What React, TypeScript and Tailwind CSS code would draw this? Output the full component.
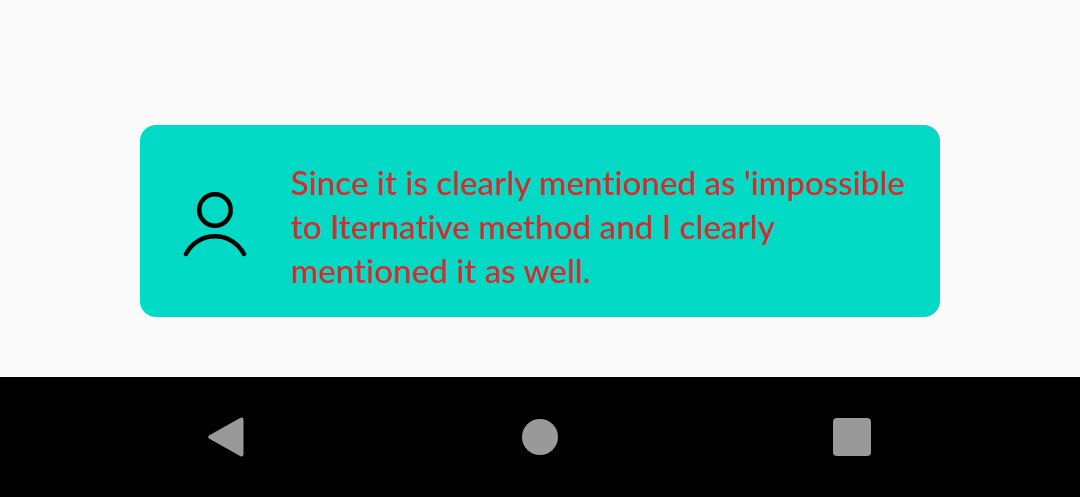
const NavBack = () => (
  <svg width="36" height="40" viewBox="0 0 36 40" className="block">
    <path d="M32.5 0.8 L1 18.6 Q-0.6 20 1 21.4 L32.5 39.2 Q35.5 40.2 35.5 37 L35.5 3 Q35.5 -0.2 32.5 0.8 Z" fill="#999999" />
  </svg>
);

const UserIcon = () => (
  <svg width="64" height="74" viewBox="0 0 64 74" fill="none" stroke="#000000" strokeWidth="4.5" strokeLinecap="round" className="block">
    <circle cx="32" cy="26" r="15.75" />
    <path d="M3 70 A32.6 32.6 0 0 1 61 70" />
  </svg>
);

export default function App() {
  return (
    <div className="w-[1080px] h-[497px] flex flex-col bg-[#fafafa] overflow-hidden font-['Lato',sans-serif]">
      <div className="flex-1 flex justify-center pt-[125px] pb-[60px]">
        <div className="w-[800px] h-[192px] bg-[#03dac6] rounded-2xl flex items-center">
          <div className="w-[150px] flex justify-center shrink-0">
            <UserIcon />
          </div>
          <p className="ml-px pt-[9px] text-[#d32f2f] text-[33.2px] font-medium leading-[44px] w-[640px] [font-variant-ligatures:none]">
            Since it is clearly mentioned as 'impossible to Iternative method and I clearly mentioned it as well.
          </p>
        </div>
      </div>
      <div className="h-[120px] bg-black flex items-center pl-[208px] shrink-0">
        <NavBack />
        <div className="ml-[278px] w-9 h-9 rounded-full bg-[#999999]" />
        <div className="ml-[275px] w-[38px] h-[38px] rounded-[4px] bg-[#999999]" />
      </div>
    </div>
  );
}
